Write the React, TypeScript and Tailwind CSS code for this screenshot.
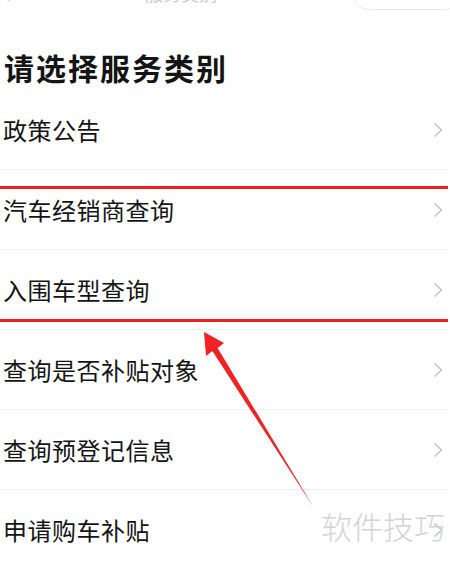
const items = ['政策公告', '汽车经销商查询', '入围车型查询', '查询是否补贴对象', '查询预登记信息', '申请购车补贴'];

function Chevron() {
  return (
    <svg width="10" height="16" viewBox="0 0 10 16" className="mr-[5px]">
      <polyline points="1.5,1.5 8.5,8 1.5,14.5" fill="none" stroke="#c4c4c4" strokeWidth="1.6" strokeLinejoin="round" />
    </svg>
  );
}

export default function App() {
  return (
    <div
      className="relative w-[450px] h-[565px] overflow-hidden bg-white text-[#141414]"
      style={{ fontFamily: '"Noto Sans CJK SC", "Noto Sans", sans-serif' }}
    >
      {/* nav bar, scrolled mostly out of view */}
      <div className="h-[10px] overflow-hidden">
        <div className="-mt-[24px] h-[34px] flex items-center justify-between">
          <span className="pl-[4px] text-[22px] text-[#bbb]">‹</span>
          <span className="text-[18px] text-[#ccc]">服务类别</span>
          <div className="w-[110px] h-[34px] mr-[-12px] rounded-full border border-[#e8e8e8] flex items-center justify-around px-4 text-[#bbb]">
            <span className="text-[14px]">···</span>
            <span className="w-[14px] h-[14px] rounded-full border-2 border-[#888]" />
          </div>
        </div>
      </div>

      <div className="h-[80px] pt-[42px] pl-[4px] text-[30px] leading-[30px] font-semibold tracking-[2px]">
        请选择服务类别
      </div>

      <ul>
        {items.map((t) => (
          <li key={t} className="h-[80px] flex items-center justify-between border-b border-[#f0f0f0] mr-[2px]">
            <span className="pl-[3px] text-[24px] leading-none tracking-[0.5px]">{t}</span>
            <Chevron />
          </li>
        ))}
      </ul>

      {/* annotations */}
      <div className="absolute left-0 right-[2px] top-[186px] h-[3px] bg-[#ee2020]" />
      <div className="absolute left-0 right-[2px] top-[319px] h-[3px] bg-[#ee2020]" />
      <svg className="absolute left-0 top-0" width="450" height="565" viewBox="0 0 450 565">
        <polygon
          points="314,508 217.6,347.9 224,343 204,332 206,356 212.4,351.1"
          fill="#f02222"
        />
      </svg>
      <div className="absolute right-[5px] top-[506px] text-[31px] leading-[40px] font-light text-[#d4d4d4] whitespace-nowrap">
        软件技巧
      </div>
    </div>
  );
}
